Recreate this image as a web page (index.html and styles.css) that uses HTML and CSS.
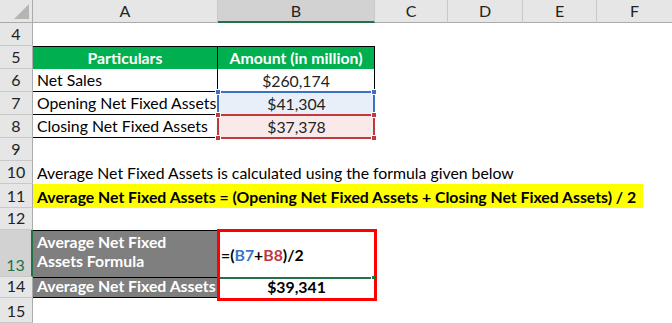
FILE: index.html
```html
<!DOCTYPE html>
<html>
<head>
<meta charset="utf-8">
<link rel="stylesheet" href="styles.css">
</head>
<body>
<div class="sheet">
  <div class="ch corner"><span class="tri"></span></div>
  <div class="ch">A</div>
  <div class="ch sel">B</div>
  <div class="ch">C</div>
  <div class="ch">D</div>
  <div class="ch">E</div>
  <div class="ch last">F</div>

  <div class="rh">4</div><div class="c span6"></div>

  <div class="rh">5</div>
  <div class="c th bt br">Particulars</div>
  <div class="c th bt br">Amount (in million)</div>
  <div class="c span4"></div>

  <div class="rh">6</div>
  <div class="c bb br">Net Sales</div>
  <div class="c num br">$260,174</div>
  <div class="c span4"></div>

  <div class="rh">7</div>
  <div class="c bb">Opening Net Fixed Assets</div>
  <div class="c num blue">$41,304</div>
  <div class="c span4"></div>

  <div class="rh">8</div>
  <div class="c bb">Closing Net Fixed Assets</div>
  <div class="c num red">$37,378</div>
  <div class="c span4"></div>

  <div class="rh">9</div><div class="c span6"></div>

  <div class="rh">10</div>
  <div class="c span6">Average Net Fixed Assets is calculated using the formula given below</div>

  <div class="rh">11</div>
  <div class="c span6 flush"><span class="hl">Average Net Fixed Assets = (Opening Net Fixed Assets + Closing Net Fixed Assets) / 2</span></div>

  <div class="rh">12</div><div class="c span6"></div>

  <div class="rh rsel">13</div>
  <div class="c gray wrap bt"><span>Average Net Fixed</span><span>Assets Formula</span></div>
  <div class="c formula">=(<span class="refb">B7</span>+<span class="refr">B8</span>)/2</div>
  <div class="c span4"></div>

  <div class="rh">14</div>
  <div class="c gray tight bt bb">Average Net Fixed Assets</div>
  <div class="c num bold">$39,341</div>
  <div class="c span4"></div>

  <div class="rh">15</div><div class="c span6"></div>

  <div class="selbox selblue"><i class="h tl"></i><i class="h tr"></i></div>
  <div class="selbox selred"><i class="h tl"></i><i class="h tr"></i><i class="h bl2"></i><i class="h br2"></i></div>
  <div class="redframe"><i class="editline"></i><i class="editdot"></i></div>
</div>
</body>
</html>
```

FILE: styles.css
```css
* { box-sizing: border-box; }
html, body { margin: 0; padding: 0; background: #fff; }
body { width: 672px; height: 323px; overflow: hidden; font-family: Lato, "Liberation Sans", sans-serif; font-size: 15.8px; color: #000; }

.sheet {
  position: relative;
  display: grid;
  grid-template-columns: 33px 185px 157px 73px 75px 74px 75px;
  grid-template-rows: 23px 23px 23px 23px 23px 23px 23px 23px 24px 22px 47px 21px 25px;
  width: 672px;
  height: 323px;
}

.ch {
  background: #e6e6e6;
  border-bottom: 1px solid #ababab;
  border-right: 1px solid #c9c9c9;
  text-align: center;
  line-height: 22px;
  color: #222;
  font-size: 16px;
}
.ch.last { border-right: none; }
.ch.sel { background: #d2d2d2; border-bottom: 2px solid #217346; }
.corner { position: relative; border-right: 1px solid #ababab; }
.tri {
  position: absolute; right: 3px; bottom: 3px;
  width: 0; height: 0;
  border-left: 15px solid transparent;
  border-bottom: 15px solid #b5b5b5;
}

.rh {
  background: #e6e6e6;
  border-right: 1px solid #ababab;
  border-bottom: 1px solid #c9c9c9;
  display: flex; align-items: flex-end; justify-content: center;
  padding-bottom: 1px;
  line-height: 21px;
  color: #222;
  font-size: 16px;
}
.rh.rsel { background: #d2d2d2; border-right: 2px solid #217346; color: #217346; }

.c {
  padding: 0 4px;
  line-height: 22px;
  white-space: nowrap;
  display: flex; align-items: flex-end;
}
.span6 { grid-column: span 6; }
.span4 { grid-column: span 4; }
.flush { padding: 0; align-items: stretch; }
.hl { background: #ffff00; font-weight: 700; padding: 1px 7px 0 4px; line-height: 23px; display: inline-block; }

.th { background: #00b050; color: #fff; font-weight: 700; justify-content: center; }
.bt { border-top: 1px solid #000; }
.bb { border-bottom: 1px solid #000; }
.br { border-right: 1px solid #000; }
.num { justify-content: center; color: #222; }
.blue { background: #e8eff9; }
.red { background: #f9e9e9; }
.bold { font-weight: 700; color: #000; }

.gray { background: #7f7f7f; color: #fff; font-weight: 700; }
.tight { padding: 0 0 0 4px; }
.wrap { line-height: 19px; padding-top: 1px; align-items: flex-start; flex-direction: column; justify-content: flex-start; }
.formula { font-weight: 700; padding-left: 3px; align-items: center; padding-top: 2px; }
.refb { color: #3c73c8; }
.refr { color: #c0393f; }

.selbox { position: absolute; left: 217px; width: 158px; }
.selblue { top: 91px; height: 25px; border: 2px solid #3c70c6; }
.selred { top: 114px; height: 25px; border: 2px solid #c0393f; }
.h { position: absolute; width: 6px; height: 6px; border: 1px solid #fff; }
.selblue .h { background: #3c70c6; }
.selred .h { background: #c0393f; }
.tl { left: -4px; top: -4px; }
.tr { right: -4px; top: -4px; }
.bl2 { left: -4px; bottom: -4px; }
.br2 { right: -4px; bottom: -4px; }

.redframe { position: absolute; left: 217px; top: 229px; width: 160px; height: 72px; border: 3px solid #ff0000; }
.editline { position: absolute; left: 0; top: 45px; width: 151px; height: 2px; background: #217346; }
.editdot { position: absolute; left: 152px; top: 44px; width: 3px; height: 3px; background: #217346; }
```
